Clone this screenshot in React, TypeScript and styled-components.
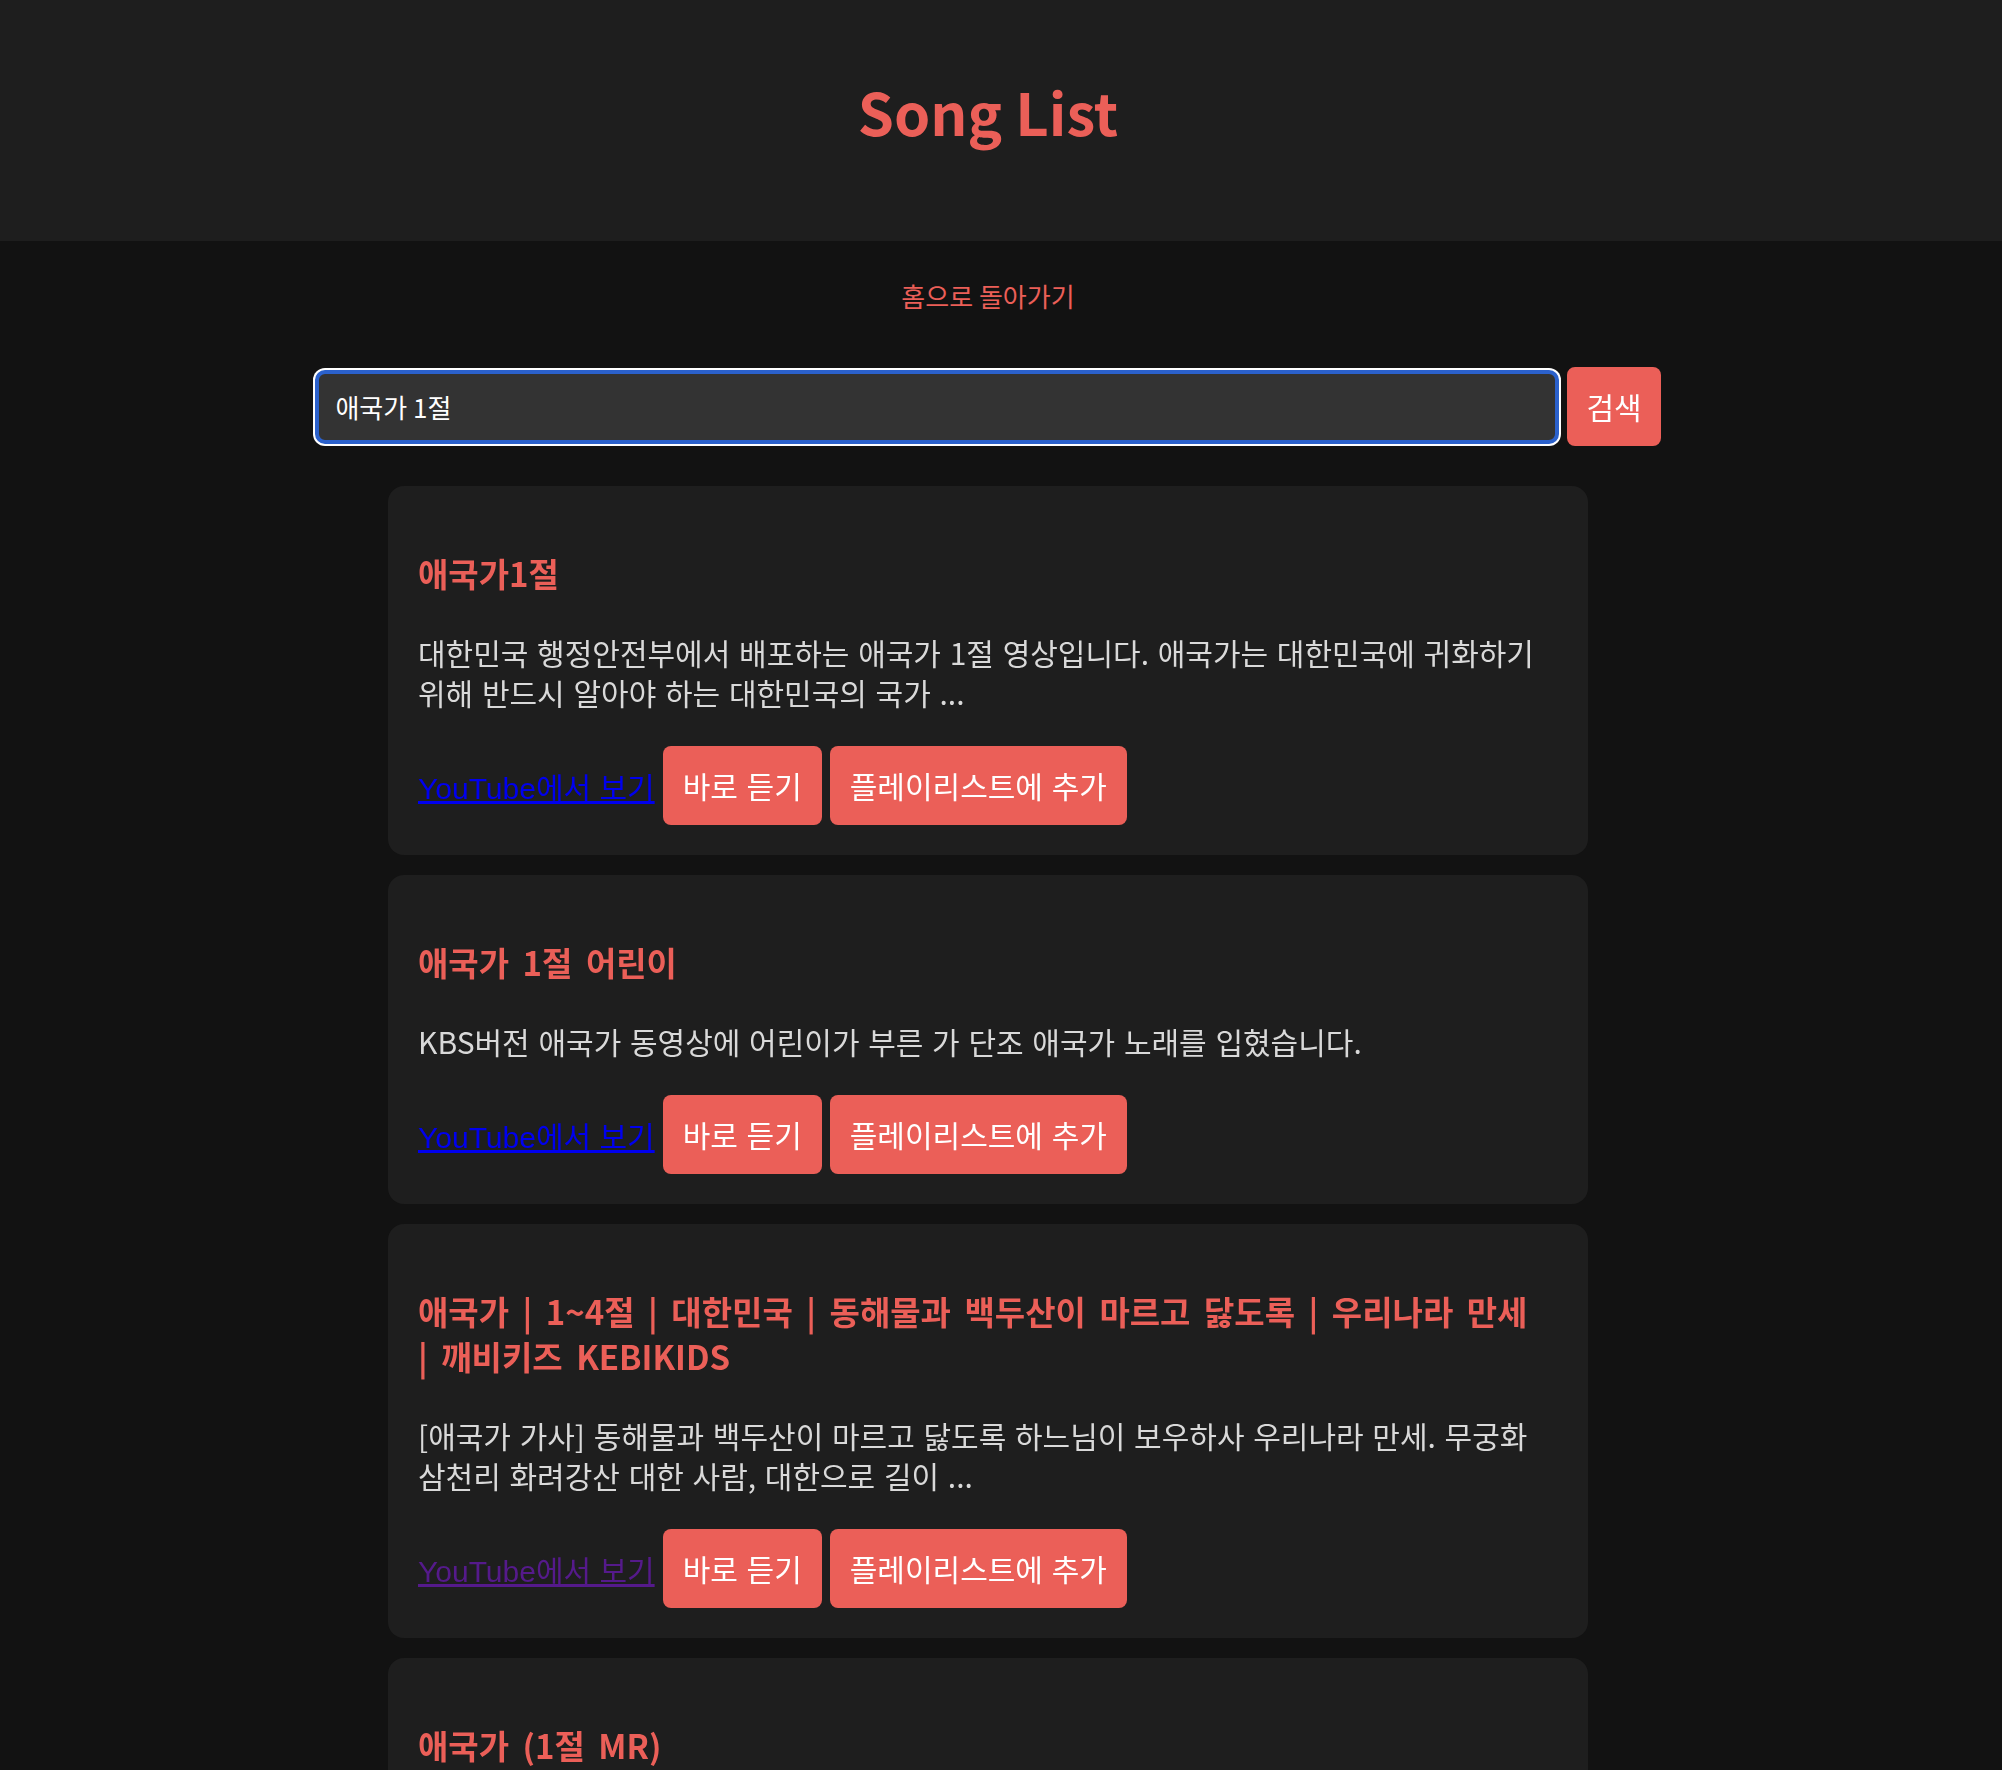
import { useState } from "react";
import styled, { createGlobalStyle } from "styled-components";

const GlobalStyle = createGlobalStyle`
    html, body {
        margin: 0;
        padding: 0;
        background-color: #121212;
        font-family: "Noto Sans CJK KR", "Noto Sans", sans-serif;
        word-break: keep-all;
    }
    * {
        box-sizing: border-box;
    }
`;

const accent = "#eb5f58";

const Page = styled.div`
    min-height: 100vh;
    background-color: #121212;
`;

const Header = styled.header`
    height: 241px;
    padding: 69px 26px 0 0;
    background-color: #1e1e1e;
    text-align: center;
`;

const Title = styled.h1`
    margin: 0;
    font-size: 58px;
    font-weight: 700;
    color: ${accent};
`;

const Main = styled.main`
    display: flex;
    flex-direction: column;
    align-items: center;
    padding: 0 26px 40px 0;
`;

const HomeLink = styled.a`
    margin-top: 36px;
    font-size: 26px;
    color: ${accent};
    text-decoration: none;
    cursor: pointer;
`;

const SearchForm = styled.form`
    display: flex;
    align-items: center;
    gap: 8px;
    margin-top: 53px;
`;

const SearchInput = styled.input`
    width: 1244px;
    height: 74px;
    padding: 0 16px;
    border: 4px solid #2b61cc;
    border-radius: 10px;
    box-shadow: 0 0 0 2px #ffffff;
    outline: none;
    background-color: #333333;
    color: #ffffff;
    caret-color: #ffffff;
    font-family: inherit;
    font-size: 26px;
`;

const Button = styled.button`
    padding: 18px 20px;
    border: none;
    border-radius: 8px;
    background-color: ${accent};
    color: #ffffff;
    font-family: inherit;
    font-size: 30px;
    line-height: 43px;
    word-spacing: 2px;
    cursor: pointer;
`;

const SearchButton = styled(Button)`
    padding: 18px 19px;
`;

const CardList = styled.ul`
    display: flex;
    flex-direction: column;
    gap: 20px;
    width: 1200px;
    margin: 40px 0 0;
    padding: 0;
    list-style: none;
`;

const Card = styled.li`
    padding: 30px;
    border-radius: 16px;
    background-color: #1e1e1e;
`;

const SongTitle = styled.h3`
    margin: 35px 0 0;
    font-size: 33px;
    font-weight: 700;
    line-height: 45px;
    word-spacing: 6px;
    color: ${accent};
`;

const Description = styled.p`
    margin: 36px 0 0;
    font-size: 30px;
    line-height: 40px;
    word-spacing: 2px;
    color: #d9d9d9;
`;

const Actions = styled.div`
    display: flex;
    align-items: center;
    gap: 8px;
    margin-top: 34px;
`;

const YoutubeLink = styled.a<{ $visited?: boolean }>`
    font-family: "Liberation Sans", "Noto Sans CJK KR", sans-serif;
    font-size: 30px;
    color: ${(p) => (p.$visited ? "#551a8b" : "#0000ee")};
    text-decoration: underline;
`;

interface Song {
    title: string;
    description: string;
    visited?: boolean;
}

// \u2060 keeps the last "|" together with the word that follows it
const songs: Song[] = [
    {
        title: "애국가1절",
        description:
            "대한민국 행정안전부에서 배포하는 애국가 1절 영상입니다. 애국가는 대한민국에 귀화하기 위해 반드시 알아야 하는 대한민국의 국가 ...",
    },
    {
        title: "애국가 1절 어린이",
        description:
            "KBS버전 애국가 동영상에 어린이가 부른 가 단조 애국가 노래를 입혔습니다.",
    },
    {
        title: "애국가 | 1~4절 | 대한민국 | 동해물과 백두산이 마르고 닳도록 | 우리나라 만세 |\u2060\u00a0\u2060깨비키즈 KEBIKIDS",
        description:
            "[애국가 가사] 동해물과 백두산이 마르고 닳도록 하느님이 보우하사 우리나라 만세. 무궁화 삼천리 화려강산 대한 사람, 대한으로 길이 ...",
        visited: true,
    },
    {
        title: "애국가 (1절 MR)",
        description: "애국가 1절 반주 영상입니다.",
    },
];

const App = () => {
    const [query, setQuery] = useState("애국가 1절");

    return (
        <Page>
            <GlobalStyle />
            <Header>
                <Title>Song List</Title>
            </Header>
            <Main>
                <HomeLink>홈으로 돌아가기</HomeLink>
                <SearchForm onSubmit={(e) => e.preventDefault()}>
                    <SearchInput
                        autoFocus
                        value={query}
                        onChange={(e) => setQuery(e.target.value)}
                    />
                    <SearchButton type="submit">검색</SearchButton>
                </SearchForm>
                <CardList>
                    {songs.map((song) => (
                        <Card key={song.title}>
                            <SongTitle>{song.title}</SongTitle>
                            <Description>{song.description}</Description>
                            <Actions>
                                <YoutubeLink href="#" $visited={song.visited}>
                                    YouTube에서 보기
                                </YoutubeLink>
                                <Button>바로 듣기</Button>
                                <Button>플레이리스트에 추가</Button>
                            </Actions>
                        </Card>
                    ))}
                </CardList>
            </Main>
        </Page>
    );
};

export default App;
